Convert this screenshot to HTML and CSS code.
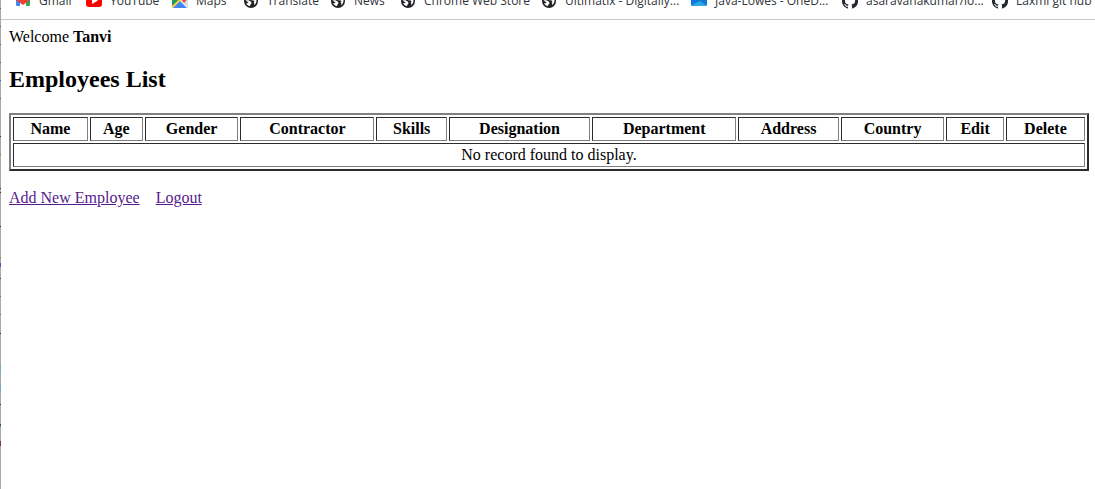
FILE: index.html
```html
<!DOCTYPE html>
<html lang="en">
<head>
<meta charset="utf-8">
<title>Employees List</title>
<link rel="stylesheet" href="styles.css">
</head>
<body>
<svg class="defs" aria-hidden="true">
  <symbol id="globe" viewBox="0 0 16 16"><circle cx="8" cy="8" r="7" fill="#202124"/><path fill="#fff" d="M2.500 7.500c2.500-.5 4.500 0 5.500 1.500 1 1 .2 2-.5 2.500l-.5 1.500C5 12.800 3.500 11.500 3 10c1.500.5 2.500.3 2.500-.5zM8.500 2.600c2.800.2 4.900 2.300 5 5 0 2-1 3.900-2.500 4.700.5-1.300.5-2.300-.5-2.800 1-.5 1.300-1.500.3-2-1.500-.3-2.800.1-3.200-1.100-.3-1.100 1.500-1.800.9-3.800z"/></symbol>
  <symbol id="github" viewBox="0 0 16 16"><path fill="#24292f" d="M8 0a8 8 0 0 0-2.530 15.590c.4.070.55-.17.55-.38v-1.490c-2.010.37-2.530-.49-2.690-.94-.09-.23-.48-.94-.82-1.130-.28-.15-.68-.52-.01-.53.630-.01 1.080.58 1.230.82.720 1.210 1.870.87 2.330.66.070-.52.280-.87.510-1.070-1.780-.2-3.640-.89-3.640-3.950 0-.87.310-1.590.82-2.150-.08-.2-.36-1.020.08-2.120 0 0 .67-.21 2.200.82a7.600 7.600 0 0 1 4 0c1.530-1.040 2.200-.82 2.200-.82.440 1.100.16 1.920.08 2.120.51.560.82 1.270.82 2.150 0 3.070-1.870 3.750-3.650 3.950.29.250.54.730.54 1.480v2.200c0 .21.150.46.550.38A8 8 0 0 0 8 0z"/></symbol>
</svg>
<nav class="bookmarks" aria-label="Bookmarks">
  <a class="bookmark" href="#"><svg class="icon" viewBox="0 0 16 16"><path fill="#4285f4" d="M1 3l4 3v7H2a1 1 0 0 1-1-1z"/><path fill="#34a853" d="M11 6l4-3v9a1 1 0 0 1-1 1h-3z"/><path fill="#ea4335" d="M1 4c0-2 1-2 2-1l5 4 5-4c1-1 2-1 2 1v3l-7 5-7-5z"/></svg>Gmail</a>
  <a class="bookmark" href="#"><svg class="icon" viewBox="0 0 16 16"><rect y="1" width="16" height="13" rx="3" fill="#f00"/><path fill="#fff" d="M6 4l6 3.500L6 11z"/></svg>YouTube</a>
  <a class="bookmark" href="#"><svg class="icon" viewBox="0 0 16 16"><path fill="#1e9c57" d="M0 0h16L0 15z"/><path fill="#ffd04b" d="M0 13L14 0l2 2L2 15H0z"/><path fill="#4285f4" d="M1 15l7-7 7 7z"/><path fill="#d9dde2" d="M9 8l5-6 2 1v12z"/><path fill="#ea4335" d="M12 0c5 0 5 5 0 10-4-5-4-10 0-10z"/></svg>Maps</a>
  <a class="bookmark" href="#"><svg class="icon"><use href="#globe"/></svg>Translate</a>
  <a class="bookmark" href="#"><svg class="icon"><use href="#globe"/></svg>News</a>
  <a class="bookmark" href="#"><svg class="icon"><use href="#globe"/></svg>Chrome Web Store</a>
  <a class="bookmark" href="#"><svg class="icon"><use href="#globe"/></svg>Ultimatix - Digitally...</a>
  <a class="bookmark" href="#"><svg class="icon" viewBox="0 0 16 16"><path fill="#0f78d4" d="M3 13a3 3 0 0 1-1-7 6 6 0 0 1 11 0 3.500 3.500 0 0 1 1 7z"/><path fill="#28a8ea" d="M1 12l8-4 6 4-1 1H3z"/></svg>Java-Lowes - OneD...</a>
  <a class="bookmark" href="#"><svg class="icon"><use href="#github"/></svg>asaravanakumar/lo...</a>
  <a class="bookmark" href="#"><svg class="icon"><use href="#github"/></svg>Laxmi git hub</a>
</nav>
<main class="page">
  <div>Welcome <b>Tanvi</b></div>
  <h2 class="title">Employees List</h2>
  <table class="employees">
    <thead>
      <tr><th>Name</th><th>Age</th><th>Gender</th><th>Contractor</th><th>Skills</th><th>Designation</th><th>Department</th><th>Address</th><th>Country</th><th>Edit</th><th>Delete</th></tr>
    </thead>
    <tbody>
      <tr><td colspan="11">No record found to display.</td></tr>
    </tbody>
  </table>
  <div class="actions"><a class="action" href="#">Add New Employee</a><a class="action" href="#">Logout</a></div>
</main>
</body>
</html>
```

FILE: styles.css
```css
body {
  margin: 0;
  min-height: 100vh;
  box-sizing: border-box;
  padding-left: 1px;
  color: #000;
  font: 16px/18px "Liberation Serif", "Times New Roman", serif;
  background:
    linear-gradient(#a9a9a9 8px, #3b62a8 8px 9px, #a9a9a9 9px 26px, #3b62a8 26px 27px, #a9a9a9 27px 44px, #3b62a8 44px 45px, #a9a9a9 45px 62px, #3b62a8 62px 63px, #a9a9a9 63px 80px, #3b62a8 80px 81px, #a9a9a9 81px 98px, #3b62a8 98px 99px, #a9a9a9 99px 136px, #333 136px 137px, #a9a9a9 137px 153px, #a89065 153px 156px, #a9a9a9 156px 188px, #5b3030 188px 189px, #a9a9a9 189px 192px, #333 192px 193px, #a9a9a9 193px 226px, #333 226px 227px, #a9a9a9 227px 257px, #a89065 257px 259px, #a9a9a9 259px 263px, #5653a0 263px 267px, #a9a9a9 267px 278px, #703a50 278px 279px, #a9a9a9 279px 296px, #3d80aa 296px 297px, #a9a9a9 297px 314px, #3d80aa 314px 315px, #a9a9a9 315px 333px, #333 333px 334px, #a9a9a9 334px 352px, #c0a870 352px 354px, #a9a9a9 354px 365px, #76abc0 365px 374px, #a9a9a9 374px 383px, #76abc0 383px 392px, #a9a9a9 392px 404px, #333 404px 405px, #a9a9a9 405px 424px, #333 424px 425px, #3d80aa 425px 427px, #a9a9a9 427px 441px, #703a60 441px 446px, #a9a9a9 446px) left top / 1px 100% no-repeat,
    #fff;
}

.defs {
  position: absolute;
  width: 0;
  height: 0;
}

.bookmarks {
  display: grid;
  grid-template-columns: 71fr 86fr 71fr 87fr 70fr 141fr 150fr 151fr 150fr 103fr;
  grid-template-rows: 19px;
  align-items: end;
  height: 19px;
  padding-left: 14px;
  border-bottom: 1px solid #c8c8c8;
  overflow: hidden;
}

.bookmark {
  display: flex;
  align-items: center;
  gap: 8px;
  height: 16px;
  margin-bottom: 10px;
  color: #303438;
  font: 12px/16px "Segoe UI", "Open Sans", sans-serif;
  text-decoration: none;
  white-space: nowrap;
}

.icon {
  flex: none;
  width: 16px;
  height: 16px;
}

.page {
  padding: 8px 6px 8px 8px;
}

.title {
  margin: 20px 0;
  font-size: 24px;
  line-height: 27px;
}

.employees {
  width: 100%;
  border: 2px solid;
  border-color: #808080 #2c2c2c #2c2c2c #808080;
  border-spacing: 2px;
}

.employees th,
.employees td {
  padding: 2px;
  border: 1px solid;
  border-color: #2c2c2c #808080 #808080 #2c2c2c;
  text-align: center;
}

.actions {
  display: flex;
  gap: 16px;
  margin-top: 18px;
}

.action {
  color: #551a8b;
}
```
